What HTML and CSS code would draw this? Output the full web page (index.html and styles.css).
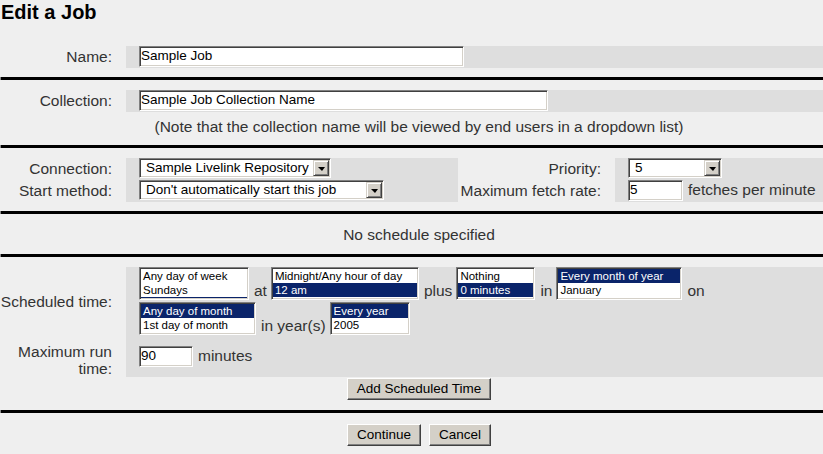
FILE: index.html
```html
<!DOCTYPE html>
<html>
<head>
<meta charset="utf-8">
<title>Edit a Job</title>
<link rel="stylesheet" href="styles.css">
</head>
<body>
<div class="page">
  <h1 class="title">Edit a Job</h1>

  <div class="grid2 row22">
    <div class="lbl">Name:</div>
    <div class="val"><div class="inp inp-name">Sample Job</div></div>
  </div>

  <hr class="sep">

  <div class="grid2 row22">
    <div class="lbl">Collection:</div>
    <div class="val"><div class="inp inp-coll">Sample Job Collection Name</div></div>
  </div>
  <p class="note">(Note that the collection name will be viewed by end users in a dropdown list)</p>

  <hr class="sep">

  <div class="grid4">
    <div class="lbl">Connection:</div>
    <div class="val"><div class="sel sel-conn"><span class="sel-text">Sample Livelink Repository</span><span class="sel-btn"></span></div></div>
    <div class="lbl">Priority:</div>
    <div class="val"><div class="sel sel-prio"><span class="sel-text">5</span><span class="sel-btn"></span></div></div>
    <div class="lbl">Start method:</div>
    <div class="val"><div class="sel sel-start"><span class="sel-text">Don't automatically start this job</span><span class="sel-btn"></span></div></div>
    <div class="lbl">Maximum fetch rate:</div>
    <div class="val"><div class="inp inp-rate">5</div><span class="unit">fetches per minute</span></div>
  </div>

  <hr class="sep">

  <p class="status">No schedule specified</p>

  <hr class="sep">

  <div class="grid2 sched">
    <div class="lbl lbl-sched">Scheduled time:</div>
    <div class="val val-sched">
      <div class="line">
        <div class="lb lb-dow"><div class="opt">Any day of week</div><div class="opt opt-last">Sundays</div></div>
        <span class="word">at</span>
        <div class="lb lb-hour"><div class="opt">Midnight/Any hour of day</div><div class="opt on">12 am</div></div>
        <span class="word">plus</span>
        <div class="lb lb-min"><div class="opt">Nothing</div><div class="opt on">0 minutes</div></div>
        <span class="word">in</span>
        <div class="lb lb-month"><div class="opt on">Every month of year</div><div class="opt">January</div></div>
        <span class="word">on</span>
      </div>
      <div class="line">
        <div class="lb lb-dom"><div class="opt on">Any day of month</div><div class="opt">1st day of month</div></div>
        <span class="word">in year(s)</span>
        <div class="lb lb-year"><div class="opt on">Every year</div><div class="opt">2005</div></div>
      </div>
    </div>
    <div class="lbl lbl-run">Maximum run<br>time:</div>
    <div class="val val-run"><div class="inp inp-run">90</div><span class="unit">minutes</span></div>
  </div>

  <div class="btnrow btnrow-add">
    <button class="btn" type="button">Add Scheduled Time</button>
  </div>

  <hr class="sep">

  <div class="btnrow btnrow-final">
    <button class="btn" type="button">Continue</button>
    <button class="btn" type="button">Cancel</button>
  </div>
</div>
</body>
</html>
```

FILE: styles.css
```css
html, body {
  margin: 0;
  padding: 0;
}
body {
  background: #efefef;
  font-family: "Liberation Sans", Arial, sans-serif;
  color: #333;
  overflow: hidden;
}
.page {
  width: 838px;
}
.title {
  font-size: 20px;
  line-height: 24px;
  font-weight: bold;
  color: #000;
  margin: 0 0 22px 1px;
}
.sep {
  display: block;
  height: 3px;
  margin: 9px 0 10px;
  border: 0;
  border-left: 1px solid #8a8a8a;
  background: #000;
}
.grid2 {
  display: grid;
  grid-template-columns: 126px 1fr;
}
.row22 {
  grid-auto-rows: 22px;
}
.grid4 {
  display: grid;
  grid-template-columns: 126px 332px 157px 1fr;
  grid-auto-rows: 22px;
}
.lbl {
  text-align: right;
  padding-right: 14px;
  font-size: 15.5px;
  line-height: 22px;
  white-space: nowrap;
}
.val {
  background: #dedede;
  padding-left: 13px;
  display: flex;
  align-items: flex-start;
}
.inp {
  box-sizing: border-box;
  height: 21px;
  background: #fff;
  color: #000;
  font-size: 13.5px;
  line-height: 17px;
  padding: 0 1px;
  border: 1px solid;
  border-color: #808080 #fff #fff #808080;
  box-shadow: inset 1px 1px 0 #404040, inset -1px -1px 0 #d4d0c8;
  white-space: nowrap;
  overflow: hidden;
}
.inp-name { width: 325px; }
.inp-coll { width: 409px; }
.inp-rate { width: 55px; }
.inp-run { width: 54px; }
.unit {
  font-size: 15.5px;
  line-height: 20px;
  margin-left: 5px;
}
.note {
  margin: 6px 0 0;
  text-align: center;
  font-size: 15.5px;
  line-height: 18px;
}
.status {
  margin: 0;
  text-align: center;
  font-size: 15.5px;
  line-height: 21px;
}

/* drop-down selects */
.sel {
  box-sizing: border-box;
  height: 20px;
  display: flex;
  align-items: stretch;
  background: #fff;
  color: #000;
  font-size: 13.5px;
  border: 1px solid;
  border-color: #808080 #fff #fff #808080;
  box-shadow: inset 1px 1px 0 #404040, inset -1px -1px 0 #d4d0c8;
  padding: 1px;
}
.sel-conn { width: 192px; }
.sel-start { width: 245px; }
.sel-prio { width: 94px; }
.sel-text {
  flex: 1;
  padding-left: 5px;
  line-height: 16px;
  white-space: nowrap;
  overflow: hidden;
}
.sel-btn {
  box-sizing: border-box;
  width: 16px;
  background: #d4d0c8;
  border: 1px solid;
  border-color: #d4d0c8 #404040 #404040 #d4d0c8;
  box-shadow: inset 1px 1px 0 #fff, inset -1px -1px 0 #808080;
  display: flex;
  align-items: center;
  justify-content: center;
}
.sel-btn::after {
  content: "";
  width: 0;
  height: 0;
  border-top: 4px solid #000;
  border-left: 4px solid transparent;
  border-right: 3px solid transparent;
  margin-top: 1px;
}

/* schedule */
.lbl-sched {
  align-self: center;
  line-height: 17px;
}
.lbl-run {
  align-self: end;
  line-height: 17px;
  white-space: normal;
}
.val-sched {
  flex-direction: column;
  gap: 2px;
}
.val-run {
  height: 42px;
  align-items: center;
}
.line {
  display: flex;
  align-items: flex-end;
}
.word {
  font-size: 15.5px;
  line-height: 18px;
  margin: 0 4px 0 5px;
  white-space: nowrap;
}
.lb {
  box-sizing: border-box;
  height: 33px;
  background: #fff;
  color: #000;
  border: 1px solid;
  border-color: #808080 #fff #fff #808080;
  box-shadow: inset 1px 1px 0 #404040, inset -1px -1px 0 #d4d0c8;
  padding: 1px 1px 2px;
  font-size: 11.5px;
  overflow: hidden;
}
.lb-dow { width: 110px; }
.lb-hour { width: 148px; }
.lb-min { width: 79px; }
.lb-month { width: 126px; }
.lb-dom { width: 117px; }
.lb-year { width: 80px; }
.opt {
  line-height: 14px;
  height: 14px;
  padding-left: 2px;
  white-space: nowrap;
}
.opt.on {
  background: #0a246a;
  color: #fff;
}
.lb-dow .opt-last {
  box-shadow: 0 1px 0 #0a246a;
}

/* buttons */
.btnrow {
  display: flex;
  justify-content: center;
  gap: 8px;
}
.btnrow-add {
  padding-top: 1px;
  padding-bottom: 1px;
}
.btnrow-final {
  padding-top: 1px;
}
.btn {
  box-sizing: border-box;
  height: 22px;
  margin: 0;
  padding: 0 9px;
  font-family: "Liberation Sans", Arial, sans-serif;
  font-size: 13.5px;
  line-height: 18px;
  color: #000;
  background: #d4d0c8;
  border: 1px solid;
  border-color: #fff #404040 #404040 #fff;
  box-shadow: inset -1px -1px 0 #808080;
  border-radius: 0;
}
```
